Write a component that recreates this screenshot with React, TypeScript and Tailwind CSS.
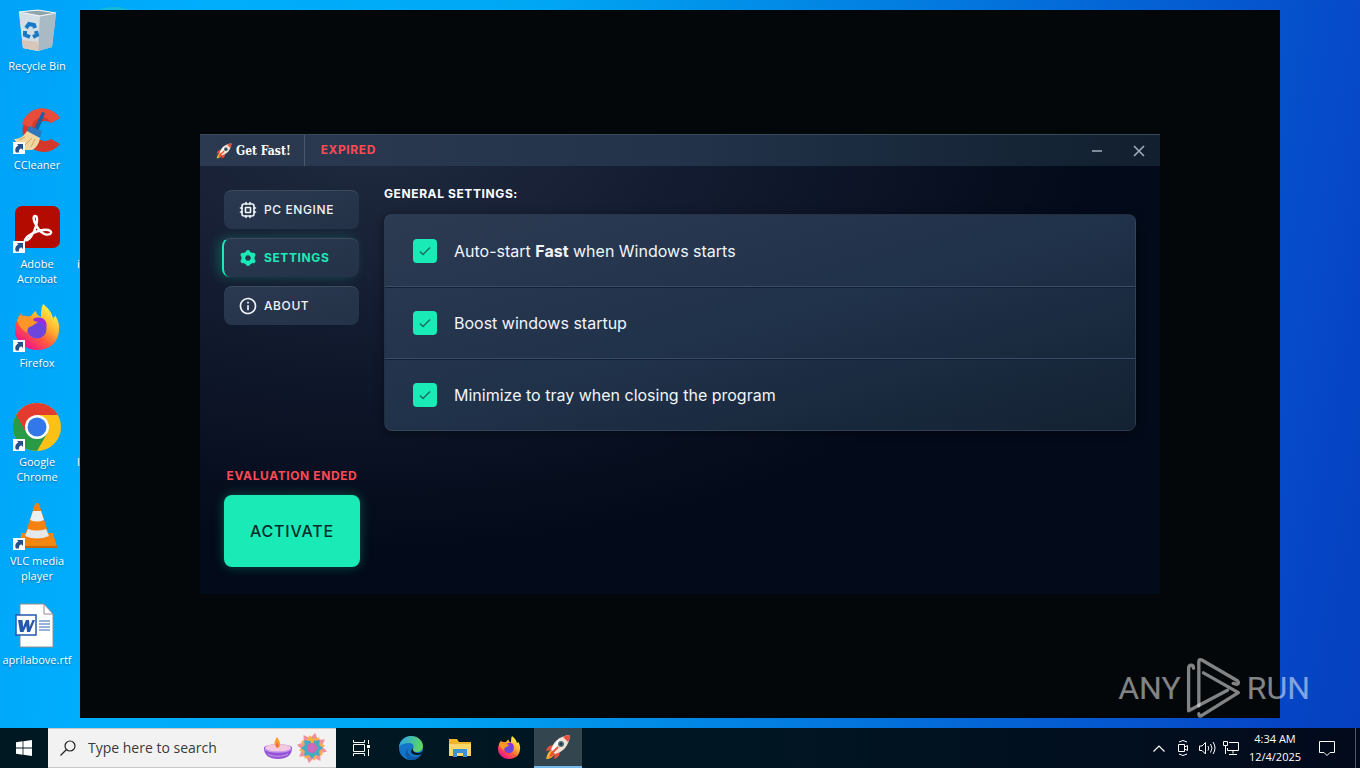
import { ReactNode, useState } from "react";
import { MdInfoOutline } from "react-icons/md";

function Shortcut() {
  return (
    <g>
      <rect x="0" y="36" width="12" height="12" fill="#f8fbff" />
      <path d="M3 46.500c-1.500-3-.5-5.500 2.500-7L4 38h6v6l-1.800-1.700C6.500 43 5.500 44.500 6 46.500z" fill="#24508c" />
    </g>
  );
}

function RecycleBinIcon() {
  return (
    <svg viewBox="0 0 48 48" className="size-12">
      <path d="M6 5 25 3 43 6 39 40 25 44 10 41z" fill="#c9d8df" />
      <path d="M6 5 27 9 25 44 10 41z" fill="#d3dfe5" />
      <path d="M27 9 43 6 39 40 25 44z" fill="#a9bac4" />
      <path d="M6 5 25 3 43 6 27 9z" fill="#8fa6ad" stroke="#f4f8fa" strokeWidth="1.2" />
      <path d="M9 33l17 2-1 9-15-3z" fill="#d9c6ba" />
      <g fill="none" stroke="#1979c9" strokeWidth="4">
        <path d="M13 21l3-4 5 1 1 3" />
        <path d="M23 24l1 4-4 2" />
        <path d="M17 30l-5-2 0-4" />
      </g>
    </svg>
  );
}

function CCleanerIcon() {
  return (
    <svg viewBox="0 0 48 48" className="size-12">
      <path d="M47 12A21 21 0 1 0 47 38L38 33A10 10 0 1 1 38 17z" fill="#d4382a" />
      <path d="M47 12A21 21 0 0 0 9 18l10 4A10 10 0 0 1 38 17z" fill="#e84c3b" />
      <path d="M29 6l3 1-7 18-4-2z" fill="#1d5f9f" />
      <path d="M16 20l13 5-2 7-13-6z" fill="#2b78bb" />
      <path d="M14 25l13 7c-1 6-4 10-8 12H9L1 33c6 0 10-3 13-8z" fill="#f1d6a0" />
      <path d="M6 34l6-3M12 39l7-7M18 41l4-8" stroke="#d0a966" strokeWidth="1" />
      <Shortcut />
    </svg>
  );
}

function AcrobatIcon() {
  return (
    <svg viewBox="0 0 48 48" className="size-12">
      <rect x="2" y="1" width="45" height="42" rx="7" fill="#b30b00" />
      <path
        d="M12 35c3 2 9-6 11-14 2-7 1-10-1-10s-2 4 1 9c4 8 10 11 14 9 3-2 0-5-7-4-7 1-16 5-18 10z"
        fill="none"
        stroke="#fff"
        strokeWidth="2.4"
      />
      <Shortcut />
    </svg>
  );
}

function FirefoxIcon({ className, shortcut }: { className: string; shortcut?: boolean }) {
  return (
    <svg viewBox="0 0 48 48" className={className}>
      <defs>
        <linearGradient id="ffx" x1="0.8" y1="0.1" x2="0.2" y2="0.9">
          <stop offset="0" stopColor="#fff04a" />
          <stop offset="0.35" stopColor="#ffb02e" />
          <stop offset="0.65" stopColor="#ff5a3c" />
          <stop offset="1" stopColor="#f0148a" />
        </linearGradient>
      </defs>
      <path
        d="M30 0c6 5 9 9 10 14 2-1 2-2 2-3 3 5 5 10 4 16-1 12-10 19-22 19S2 37 2 26c0-7 3-12 6-17l2 4c3 0 5-1 8-1 2-3 3-4 5-5 0 3 2 5 5 6 0-5 0-9 2-13z"
        fill="url(#ffx)"
      />
      <circle cx="24" cy="25" r="9.500" fill="#6d45dc" />
      <path d="M20 15c8-4 16 1 13 10 0-3-2-5-5-6s-6-1-8-4z" fill="#9c2bd8" />
      <path d="M4 17l2-5c6-1 12 0 15 5l4 1-6 4c-4 1-5 3-5 7-5-3-8-7-10-12z" fill="#ff9429" />
      {shortcut && <Shortcut />}
    </svg>
  );
}

function ChromeIcon() {
  return (
    <svg viewBox="0 0 48 48" className="size-12">
      <circle cx="24" cy="24" r="24" fill="#fbc116" />
      <path d="M3.200 12A24 24 0 0 0 24 48l10.400-18L24 24z" fill="#2b9a46" />
      <path d="M3.200 12A24 24 0 0 1 44.800 12H24L13.600 30z" fill="#e33b2e" />
      <circle cx="24" cy="24" r="12" fill="#fff" />
      <circle cx="24" cy="24" r="9.500" fill="#3378ea" />
      <Shortcut />
    </svg>
  );
}

function VlcIcon() {
  return (
    <svg viewBox="0 0 48 48" className="size-12">
      <path d="M8 31h32l4 14H7z" fill="#f08713" />
      <path d="M7 44h37v2H7z" fill="#c9640a" />
      <path d="M22 2q2-2 4 0l11 34q-13 6-26 0z" fill="#f58112" />
      <path d="M20 9h8l3 9q-7 3-14 0z" fill="#eceff0" />
      <path d="M15 27q9 3 18 0l3 7q-12 5-24 0z" fill="#e4e8ea" />
      <Shortcut />
    </svg>
  );
}

function WordFileIcon() {
  return (
    <svg viewBox="0 0 48 48" className="size-12">
      <path d="M7 3h24l9 10v33H7z" fill="#fff" stroke="#8e8e8e" strokeWidth="1" />
      <path d="M31 3v10h9" fill="none" stroke="#8e8e8e" strokeWidth="1" />
      <path d="M26 20h11M26 23h11M26 26h11M26 29h11" stroke="#2f66b5" strokeWidth="1" />
      <rect x="3" y="14" width="20" height="20" fill="#fff" stroke="#2458ad" strokeWidth="1.500" />
      <path d="M5 19h4.500l.6 7 2.900-7h3l.6 7 2.900-7H22l-5 12h-3l-.7-6-2.800 6H7z" fill="#2458ad" />
      <path d="M0 0" />
    </svg>
  );
}

function RocketIcon({ className }: { className: string }) {
  return (
    <svg viewBox="0 0 26 26" className={className}>
      <path d="M6 16c-3 2-4 5-5 9 4 0 7-2 9-5z" fill="#f9b233" />
      <path d="M8 18c-2 1-3 2-4 5 2 0 4-1 6-4z" fill="#f04d32" />
      <path d="M9 11c-4 0-7 2-8 6l6-1zM15 17c0 4-2 7-6 8l1-6z" fill="#e5523c" />
      <path d="M6 16C8 8 14 2 25 1c-1 11-7 17-15 19z" fill="#f1e3d3" />
      <path d="M18 3c2-1 4-2 7-2 0 3-1 5-2 7z" fill="#e5523c" />
      <path d="M7 15c2-5 5-8 8-11-2 5-3 9-5 13z" fill="#fff" />
      <circle cx="16" cy="10" r="3" fill="#54707c" />
      <circle cx="16" cy="10" r="1.500" fill="#1d3a48" />
      <path d="M6 20l7-7" stroke="#e5523c" strokeWidth="2" />
    </svg>
  );
}

function DiyaIcon() {
  return (
    <svg viewBox="0 0 28 24" className="h-6 w-7">
      <path d="M0 12c0-5 28-5 28 0 0 7-5 11-14 11S0 19 0 12z" fill="#9456d6" />
      <ellipse cx="14" cy="12" rx="13" ry="4" fill="#f2c9de" />
      <path d="M1 13c5 4 21 4 26 0" fill="none" stroke="#c79af0" strokeWidth="1.500" />
      <path d="M4 18c4 3 15 3 20 0" fill="none" stroke="#c79af0" strokeWidth="1" />
      <path d="M13 1c3 4 5 9 1 11-5-2-4-7-1-11z" fill="#f8a12f" />
      <path d="M13 6c2 3 2 5 0 6-2-2-1-4 0-6z" fill="#f5664c" />
    </svg>
  );
}

function RangoliIcon() {
  const petals = [0, 45, 90, 135, 180, 225, 270, 315];
  return (
    <svg viewBox="-16 -16 32 32" className="size-8">
      {petals.map((a) => (
        <g key={a} transform={`rotate(${a})`}>
          <path d="M0-15.500 4-9 0 0-4-9z" fill="#f3909c" transform="rotate(12)" />
          <path d="M0-13 4-8 0 0-4-8z" fill="#f6b04a" transform="rotate(34)" />
          <path d="M0-11 4-6 0 0-4-6z" fill="#45abc4" />
        </g>
      ))}
      <circle r="5" fill="#d765b0" />
      <circle r="2" fill="#b276d8" />
    </svg>
  );
}

function EdgeIcon() {
  return (
    <svg viewBox="0 0 24 24" className="size-6">
      <defs>
        <linearGradient id="edgeTop" x1="0" y1="0.4" x2="1" y2="0.6">
          <stop offset="0" stopColor="#2aa7e4" />
          <stop offset="1" stopColor="#62d95a" />
        </linearGradient>
      </defs>
      <circle cx="12" cy="12" r="12" fill="#1374c8" />
      <path d="M0 11C1 4 6 0 12 0c7 0 12 5 12 10 0 4-3 6-6 6-3 0-5-1-4-3 2-4-1-6-4-6-4 0-8 1-10 4z" fill="url(#edgeTop)" />
      <path d="M9 12c-2 4 2 9 7 9 2 0 4-1 6-2-3 4-6 5-10 5-5-1-8-7-3-12z" fill="#0d5aa6" />
      <path d="M14 12c-1 3 2 5 5 5 2 0 3-.5 5-2-1 3-3 4-6 4-5 0-8-3-4-7z" fill="#001722" />
    </svg>
  );
}

function ExplorerIcon() {
  return (
    <svg viewBox="0 0 22 20" className="h-5 w-[22px]">
      <path d="M0 1h8l2 3h12v14H0z" fill="#f0b52d" />
      <path d="M0 6h22v12H0z" fill="#fbd668" />
      <path d="M4 11h14v8h-4v-4H8v4H4z" fill="#3b92d6" />
    </svg>
  );
}

function ChipIcon() {
  return (
    <svg viewBox="0 0 20 20" className="size-5" fill="none" stroke="currentColor" strokeWidth="1.6" strokeLinecap="round">
      <rect x="4" y="4" width="12" height="12" rx="2" />
      <rect x="7.500" y="7.500" width="5" height="5" rx=".5" />
      <path d="M8 2.500V4M12 2.500V4M8 16v1.500M12 16v1.500M2.500 8H4M2.500 12H4M16 8h1.500M16 12h1.500" />
    </svg>
  );
}

function GearIcon() {
  return (
    <svg viewBox="0 0 20 20" className="size-5" fill="none" stroke="currentColor">
      <circle cx="10" cy="10" r="4.700" strokeWidth="3.800" />
      <path
        d="M10 5V4M10 15v1M5.700 7.500l-1-.6M14.300 12.500l1 .6M5.700 12.500l-1 .6M14.300 7.500l1-.6"
        strokeWidth="4.200"
        strokeLinecap="round"
      />
    </svg>
  );
}

const desktopIcons = [
  { name: "Recycle Bin", icon: <RecycleBinIcon /> },
  { name: "CCleaner", icon: <CCleanerIcon /> },
  { name: "Adobe Acrobat", icon: <AcrobatIcon /> },
  { name: "Firefox", icon: <FirefoxIcon className="size-12" shortcut /> },
  { name: "Google Chrome", icon: <ChromeIcon /> },
  { name: "VLC media player", icon: <VlcIcon /> },
  { name: "aprilabove.rtf", icon: <WordFileIcon /> },
];

const navItems = [
  { name: "PC ENGINE", icon: <ChipIcon /> },
  { name: "SETTINGS", icon: <GearIcon /> },
  { name: "ABOUT", icon: <MdInfoOutline className="size-5" /> },
];

const settings = [
  { id: "autostart", label: <>Auto-start <b className="font-bold">Fast</b> when Windows starts</> },
  { id: "boost", label: "Boost windows startup" },
  { id: "tray", label: "Minimize to tray when closing the program" },
];

function Setting({ id, label }: { id: string; label: ReactNode }) {
  const [checked, setChecked] = useState(true);

  return (
    <div className="flex items-center gap-[17px] border-b border-[#3b4b61] pt-6 pr-7 pb-[23px] pl-7 shadow-[0_1px_0_#13203a] last:border-b-0 last:shadow-none">
      <div className="grid size-6 place-items-center">
        <input
          id={id}
          type="checkbox"
          checked={checked}
          onChange={(e) => setChecked(e.target.checked)}
          className="peer col-start-1 row-start-1 size-6 appearance-none rounded bg-[#33445a] checked:bg-[#1aebb6]"
        />
        <svg viewBox="0 0 12 10" className="pointer-events-none invisible col-start-1 row-start-1 h-2.5 w-3 peer-checked:visible">
          <path d="M1 5.500 4 8.500 11 1.500" fill="none" stroke="#14705f" strokeWidth="1.500" />
        </svg>
      </div>
      <label htmlFor={id} className="text-base leading-6 text-[#f1f5f9]">{label}</label>
    </div>
  );
}

function FastWindow() {
  const [active, setActive] = useState("SETTINGS");

  return (
    <div className="flex flex-1 flex-col bg-[#030a19] bg-[radial-gradient(ellipse_75%_90%_at_18%_0%,#202b3f_0%,#131b30_45%,#030a1900_100%)] font-[Inter,sans-serif]">
      <header className="flex h-8 items-stretch border-t border-[#3b485a] bg-linear-to-r from-[#2c3a51] via-[#22334a] to-[#111f2e]">
        <div className="flex items-center gap-1 border-r border-[#4a586c] pr-[13px] pl-4">
          <RocketIcon className="size-4" />
          <span className="font-['DejaVu_Serif_Condensed','DejaVu_Serif',serif] text-xs font-bold text-white">Get Fast!</span>
        </div>
        <span className="flex-1 pt-[7px] pl-4 text-xs leading-4 font-bold tracking-wider text-[#fb4a55]">EXPIRED</span>
        <button aria-label="Minimize" className="grid w-[42px] place-items-center">
          <svg viewBox="0 0 12 12" className="size-3"><path d="M1 6h10" stroke="#a3afbd" strokeWidth="1.500" /></svg>
        </button>
        <button aria-label="Close" className="grid w-[42px] place-items-center">
          <svg viewBox="0 0 12 12" className="size-3"><path d="M1 1l10 10M11 1 1 11" stroke="#a3afbd" strokeWidth="1.500" /></svg>
        </button>
      </header>

      <div className="flex flex-1 gap-6 px-6 pt-5 pb-[27px]">
        <aside className="flex w-34 flex-col justify-between pt-1">
          <nav className="flex flex-col gap-[9px] pr-px">
            {navItems.map(({ name, icon }) => (
              <button
                key={name}
                onClick={() => setActive(name)}
                className={`flex h-[39px] items-center gap-1.5 rounded-lg border-t border-[#3d4b61] bg-linear-to-br from-[#2b3950] to-[#243248] pb-px text-xs tracking-wider ${
                  active === name
                    ? "-ml-0.5 border-l-2 border-l-[#1aebb6] pl-3.5 font-bold text-[#1aebb6] shadow-[-4px_0_12px_#1aebb63d]"
                    : "pl-3.5 font-medium text-[#f1f5f9]"
                }`}
              >
                {icon}
                {name}
              </button>
            ))}
          </nav>
          <div className="flex flex-col gap-[11px]">
            <p className="text-center text-xs font-bold tracking-wider whitespace-nowrap text-[#fb4a55]">EVALUATION ENDED</p>
            <button className="h-18 rounded-lg bg-[#1aebb6] text-base font-medium tracking-wider text-[#062b2c] shadow-[0_0_12px_#1aebb64d]">
              ACTIVATE
            </button>
          </div>
        </aside>

        <main className="flex flex-1 flex-col gap-3">
          <h1 className="text-xs font-bold tracking-wider text-white">GENERAL SETTINGS:</h1>
          <section className="rounded-lg border border-[#ffffff0d] bg-linear-to-br from-[#2c3b52] via-[#20314a] to-[#132232] shadow-[0_2px_8px_#00000066]">
            {settings.map((s) => (
              <Setting key={s.id} id={s.id} label={s.label} />
            ))}
          </section>
        </main>
      </div>
    </div>
  );
}

function Watermark() {
  return (
    <div className="pointer-events-none absolute right-[50px] bottom-[49px] flex items-center gap-[5px] font-['Liberation_Sans_Narrow',Roboto,sans-serif] text-[32px] leading-none text-white/50">
      <span>ANY</span>
      <svg viewBox="328 52 168 188" className="h-[62px] w-14" fill="none" stroke="currentColor" strokeWidth="10" strokeLinejoin="round" strokeLinecap="round">
        <path d="M350 86q0-9-7-9-8 0-8 10v128l118-62" />
        <path d="M366 200V66q0-9 9-5l108 63q7 7-1 11l-12-3" />
        <path d="M380 100l106 60-112 70q-8 4-8-6" />
      </svg>
      <span>RUN</span>
    </div>
  );
}

function Taskbar() {
  return (
    <footer className="flex h-10 items-stretch bg-linear-to-r from-[#001821] via-[#001723] to-[#020a1c] text-white">
      <button aria-label="Start" className="grid w-12 place-items-center">
        <svg viewBox="0 0 16 16" className="size-4" fill="#fff">
          <path d="M0 2.200 6.600 1.300v6.300H0zM7.400 1.200 16 0v7.600H7.400zM0 8.400h6.600v6.300L0 13.800zM7.400 8.400H16V16l-8.600-1.200z" />
        </svg>
      </button>
      <label htmlFor="search" className="flex w-72 items-center gap-3 border-y border-[#c8c8c8] bg-[#f2f2f2] pr-2 pl-3">
        <svg viewBox="0 0 16 16" className="size-4 shrink-0" fill="none" stroke="#222" strokeWidth="1.200">
          <circle cx="10" cy="6" r="5" />
          <path d="M6.500 9.500.5 15.500" />
        </svg>
        <input
          id="search"
          placeholder="Type here to search"
          className="min-w-0 flex-1 bg-transparent text-sm text-[#333] outline-none placeholder:text-[#3a3a3a]"
        />
        <span className="flex shrink-0 items-center gap-1">
          <DiyaIcon />
          <RangoliIcon />
        </span>
      </label>
      <div className="flex flex-1 gap-px">
        <button aria-label="Task View" className="grid w-[50px] place-items-center">
          <svg viewBox="0 0 17 16" className="h-4 w-[17px]" fill="none" stroke="#fff">
            <path d="M.5 0v2.500h11V0M.5 16v-2.500h11V16M.5 4.500h11v7H.5zM15.500 0v4M15.500 9v7" />
            <path d="M14 5h3v3h-3z" fill="#fff" stroke="none" />
          </svg>
        </button>
        <button aria-label="Microsoft Edge" className="grid w-12 place-items-center"><EdgeIcon /></button>
        <button aria-label="File Explorer" className="grid w-12 place-items-center"><ExplorerIcon /></button>
        <button aria-label="Firefox" className="grid w-12 place-items-center"><FirefoxIcon className="size-6" /></button>
        <button aria-label="Get Fast!" className="grid w-12 place-items-center border-b-2 border-[#76b9ed] bg-[#33464f]">
          <RocketIcon className="size-[26px]" />
        </button>
      </div>
      <button aria-label="Show hidden icons" className="grid w-6 place-items-center">
        <svg viewBox="0 0 12 7" className="h-[7px] w-3"><path d="M.5 6.500 6 1l5.500 5.500" fill="none" stroke="#fff" strokeWidth="1.200" /></svg>
      </button>
      <button aria-label="Meet Now" className="grid w-6 place-items-center">
        <svg viewBox="0 0 12 16" className="h-4 w-3" fill="none" stroke="#fff">
          <path d="M1.500 4.500h6v7h-6zM7.500 7l3-1.500v5L7.500 9M2 2q4-3 8 0M2 14q4 3 8 0" />
        </svg>
      </button>
      <button aria-label="Volume" className="grid w-6 place-items-center">
        <svg viewBox="0 0 17 14" className="h-3.5 w-[17px]" fill="none" stroke="#fff">
          <path d="M.5 5v4.500h2.500l3.500 3.500V1.500L3 5zM9 5q1.500 2 0 4.500M11.500 3q3 4 0 8.500M14 1q4 6 0 12" />
        </svg>
      </button>
      <button aria-label="Network" className="grid w-6 place-items-center">
        <svg viewBox="0 0 16 14" className="h-3.5 w-4" fill="none" stroke="#fff">
          <path d="M6 1.500h9.500v8H4.500V7M.5.500h4v4h-4zM2.500 4.500v8.500M10 9.500v3M6 13.500h8" />
        </svg>
      </button>
      <button className="w-16 text-center text-[11px] leading-[18px]">
        4:34 AM<br />12/4/2025
      </button>
      <button aria-label="Notifications" className="grid w-10 place-items-center">
        <svg viewBox="0 0 16 16" className="size-4"><path d="M.5 1.500h15v11H11L8 15.500 5 12.500H.5z" fill="none" stroke="#fff" /></svg>
      </button>
      <button aria-label="Show desktop" className="ml-2 w-[5px] border-l border-[#4d5766]" />
    </footer>
  );
}

export default function App() {
  return (
    <div className="relative flex min-h-screen flex-col bg-[linear-gradient(100deg,#00a2f8_0%,#00aefc_14%,#00a8f4_35%,#0648c8_92%,#043fbe_100%)] font-['Open_Sans',sans-serif]">
      <div className="flex flex-1">
        <div className="relative w-20 shrink-0 overflow-hidden pt-[7px]">
          <ul className="w-[74px]">
            {desktopIcons.map((d) => (
              <li key={d.name} className="flex h-[99px] flex-col items-center gap-[3px] text-center text-[11px] leading-[15px] text-white [text-shadow:0_1px_2px_#0006]">
                {d.icon}
                {d.name}
              </li>
            ))}
          </ul>
          <span className="absolute top-64 left-[77px] text-[11px] leading-[15px] text-white">i</span>
          <span className="absolute top-[454px] left-[77px] text-[11px] leading-[15px] text-white">l</span>
        </div>
        <div className="relative flex flex-1 flex-col py-2.5 pr-20">
          <div className="absolute top-[7px] left-3.5 h-4 w-10 rounded-[50%] bg-[#16b9d4]" />
          <div className="relative flex flex-1 flex-col bg-[#040709] px-30 py-31">
            <FastWindow />
          </div>
        </div>
      </div>
      <Taskbar />
      <Watermark />
    </div>
  );
}
